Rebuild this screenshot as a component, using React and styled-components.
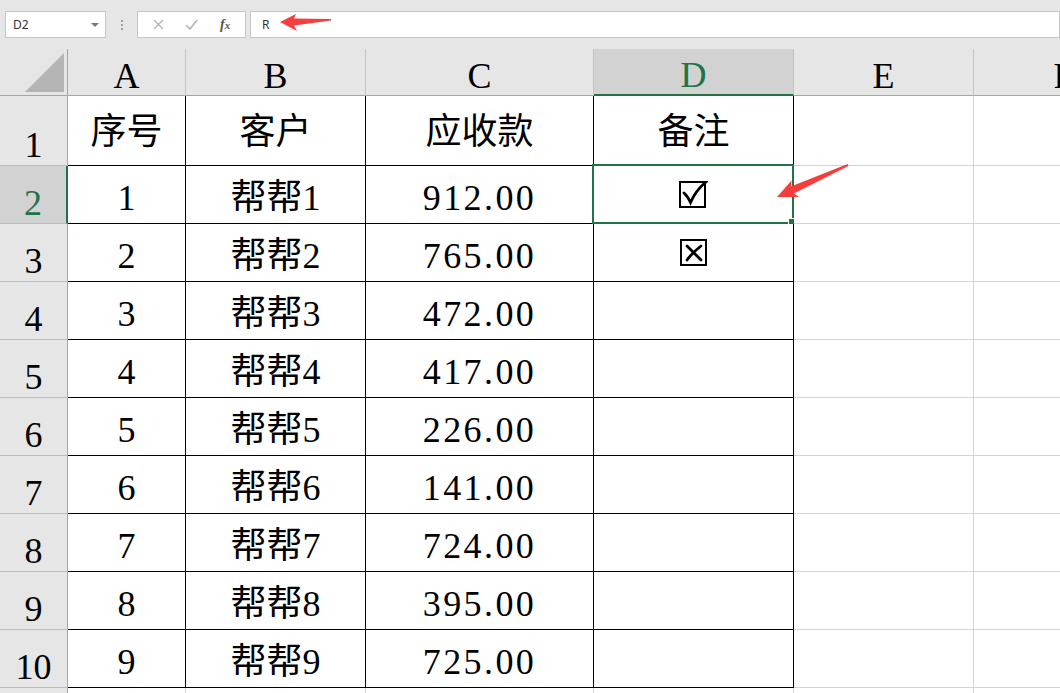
import styled, { createGlobalStyle } from 'styled-components';

const GREEN = '#217346';

const GlobalStyle = createGlobalStyle`
  html, body {
    margin: 0;
    padding: 0;
    background: #e6e6e6;
    overflow: hidden;
  }
  * {
    box-sizing: border-box;
  }
`;

const Page = styled.div`
  position: relative;
  width: 1060px;
  height: 693px;
  overflow: hidden;
  background: #e6e6e6;
`;

const FormulaBar = styled.div`
  display: flex;
  align-items: center;
  height: 49px;
  padding: 11px 0 11px 5px;
  font-family: 'Noto Sans', 'Liberation Sans', sans-serif;
  font-size: 12px;
  color: #333;
`;

const Field = styled.div`
  height: 27px;
  background: #fff;
  border: 1px solid #c6c6c6;
  display: flex;
  align-items: center;
`;

const NameBox = styled(Field)`
  width: 101px;
  padding: 0 6px 0 7px;
  justify-content: space-between;

  &::after {
    content: '';
    border-left: 4px solid transparent;
    border-right: 4px solid transparent;
    border-top: 4px solid #777;
  }
`;

const Grip = styled.div`
  width: 31px;
  display: flex;
  flex-direction: column;
  align-items: center;
  gap: 2px;

  span {
    width: 2px;
    height: 2px;
    background: #a0a0a0;
  }
`;

const ActionBox = styled(Field)`
  width: 109px;
  justify-content: space-around;
  padding: 0 4px;
`;

const FxLabel = styled.span`
  font-family: 'Liberation Serif', serif;
  font-style: italic;
  font-weight: bold;
  color: #555;
  font-size: 14px;

  small {
    font-size: 11px;
  }
`;

const InputBox = styled(Field)`
  flex: 1;
  margin-left: 4px;
  padding-left: 11px;
`;

const SheetWrap = styled.div`
  width: 1060px;
  overflow: hidden;
`;

const Sheet = styled.div`
  display: grid;
  width: 1154px;
  grid-template-columns: 68px 118px 180px 228px 200px 180px 180px;
  grid-template-rows: 47px 70px repeat(10, 58px);
  font-family: 'Liberation Serif', 'Noto Sans CJK SC', serif;
  font-size: 36px;
  line-height: 1;
  color: #000;
`;

const Corner = styled.div`
  background: #e6e6e6;
  border-right: 1px solid #a6a6a6;
  border-bottom: 1px solid #a6a6a6;
  position: relative;

  &::after {
    content: '';
    position: absolute;
    right: 3px;
    bottom: 3px;
    width: 39px;
    height: 39px;
    background: #b4b4b4;
    clip-path: polygon(100% 0, 100% 100%, 0 100%);
  }
`;

const ColHead = styled.div`
  display: flex;
  justify-content: center;
  align-items: flex-end;
  padding-bottom: 1px;
  background: ${(p) => (p.$active ? '#d2d2d2' : '#e6e6e6')};
  color: ${(p) => (p.$active ? GREEN : '#000')};
  border-right: 1px solid #c4c4c4;
  border-bottom: ${(p) => (p.$active ? `2px solid ${GREEN}` : '1px solid #a6a6a6')};
`;

const RowHead = styled.div`
  display: flex;
  justify-content: center;
  align-items: flex-end;
  padding-bottom: 2px;
  background: ${(p) => (p.$active ? '#d2d2d2' : '#e6e6e6')};
  color: ${(p) => (p.$active ? GREEN : '#000')};
  border-right: ${(p) => (p.$active ? `2px solid ${GREEN}` : '1px solid #a6a6a6')};
  border-bottom: 1px solid #bcbcbc;
`;

const Cell = styled.div`
  position: relative;
  display: flex;
  justify-content: center;
  align-items: center;
  padding-top: ${(p) => (p.$head ? '2px' : p.$icon ? '0' : '6px')};
  background: #fff;
  letter-spacing: ${(p) => (p.$money ? '2.4px' : '0')};
  border-right: 1px solid ${(p) => (p.$boxed ? '#000' : '#d4d4d4')};
  border-bottom: 1px solid ${(p) => (p.$boxed ? '#000' : '#d4d4d4')};
`;

const SelectionFrame = styled.div`
  position: absolute;
  top: -2px;
  left: -2px;
  right: -1px;
  bottom: -1px;
  border: 2px solid ${GREEN};
  pointer-events: none;

  &::after {
    content: '';
    position: absolute;
    right: -4px;
    bottom: -4px;
    width: 6px;
    height: 6px;
    background: ${GREEN};
    border: 1px solid #fff;
  }
`;

const Overlay = styled.svg`
  position: absolute;
  left: 0;
  top: 0;
  pointer-events: none;
`;

const CheckIcon = () => (
  <svg width="29" height="28" viewBox="0 0 29 28">
    <rect x="1" y="1" width="25" height="25" fill="none" stroke="#000" strokeWidth="2" />
    <path d="M5 12 Q8.5 15 11.5 21.5 Q17 9 28 0" fill="none" stroke="#000" strokeWidth="2.8" strokeLinecap="round" />
  </svg>
);

const CrossIcon = () => (
  <svg width="28" height="28" viewBox="0 0 28 28">
    <rect x="1" y="1" width="25" height="25" fill="none" stroke="#000" strokeWidth="2" />
    <path d="M7 7 Q13 13 21 21 M21 7 Q12 14 7 21" fill="none" stroke="#000" strokeWidth="2.8" strokeLinecap="round" />
  </svg>
);

const columns = ['A', 'B', 'C', 'D', 'E', 'F'];

const rows = [
  ['1', '帮帮1', '912.00'],
  ['2', '帮帮2', '765.00'],
  ['3', '帮帮3', '472.00'],
  ['4', '帮帮4', '417.00'],
  ['5', '帮帮5', '226.00'],
  ['6', '帮帮6', '141.00'],
  ['7', '帮帮7', '724.00'],
  ['8', '帮帮8', '395.00'],
  ['9', '帮帮9', '725.00'],
];

const notes = { 0: <CheckIcon />, 1: <CrossIcon /> };

const App = () => {
  return (
    <Page>
      <GlobalStyle />
      <FormulaBar>
        <NameBox>D2</NameBox>
        <Grip>
          <span />
          <span />
          <span />
        </Grip>
        <ActionBox>
          <svg width="11" height="11" viewBox="0 0 11 11">
            <path d="M1 1 L10 10 M10 1 L1 10" stroke="#b4b4b4" strokeWidth="1.4" />
          </svg>
          <svg width="13" height="11" viewBox="0 0 13 11">
            <path d="M1 6 L5 10 L12 1" fill="none" stroke="#b4b4b4" strokeWidth="1.6" />
          </svg>
          <FxLabel>
            f<small>x</small>
          </FxLabel>
        </ActionBox>
        <InputBox>R</InputBox>
      </FormulaBar>

      <SheetWrap>
        <Sheet>
          <Corner />
          {columns.map((c) => (
            <ColHead key={c} $active={c === 'D'}>
              {c}
            </ColHead>
          ))}

          <RowHead>1</RowHead>
          <Cell $boxed $head>序号</Cell>
          <Cell $boxed $head>客户</Cell>
          <Cell $boxed $head>应收款</Cell>
          <Cell $boxed $head>备注</Cell>
          <Cell />
          <Cell />

          {rows.map(([no, name, amount], i) => (
            <>
              <RowHead key={`h${i}`} $active={i === 0}>
                {i + 2}
              </RowHead>
              <Cell key={`a${i}`} $boxed>{no}</Cell>
              <Cell key={`b${i}`} $boxed>{name}</Cell>
              <Cell key={`c${i}`} $boxed $money>{amount}</Cell>
              <Cell key={`d${i}`} $boxed $icon>
                {notes[i]}
                {i === 0 && <SelectionFrame />}
              </Cell>
              <Cell key={`e${i}`} />
              <Cell key={`f${i}`} />
            </>
          ))}

          {/* row 11 only peeks in at the bottom edge */}
          <RowHead />
          <Cell />
          <Cell />
          <Cell />
          <Cell />
          <Cell />
          <Cell />
        </Sheet>
      </SheetWrap>

      <Overlay width="1060" height="693" viewBox="0 0 1060 693">
        <polygon
          points="280,22 296,14 294,18.5 331,19 331,20.5 294,25.5 297,31"
          fill="#f53d3d"
        />
        <polygon
          points="777,197 799,197 794,193.6 848.4,165.9 847.6,164.1 790.9,186.4 791.5,180.6"
          fill="#f53d3d"
        />
      </Overlay>
    </Page>
  );
};

export default App;
